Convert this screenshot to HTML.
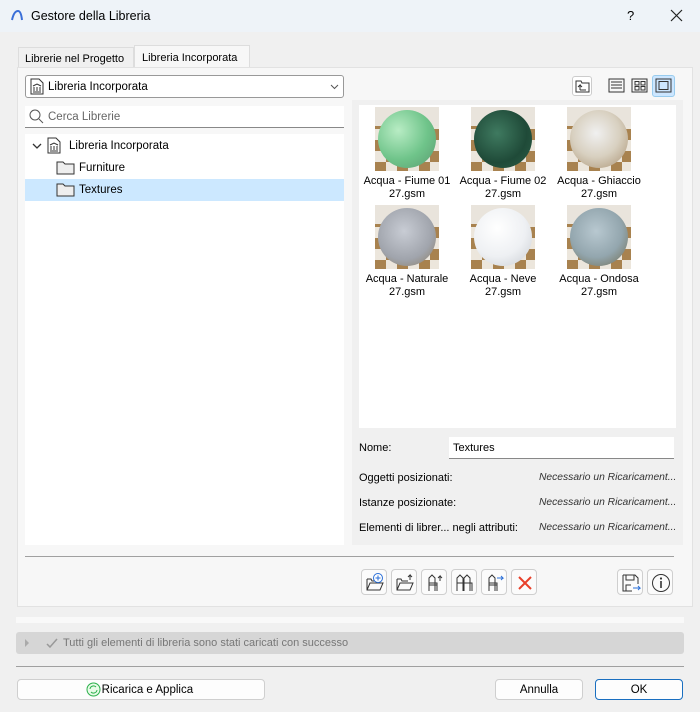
<!DOCTYPE html><html><head><meta charset="utf-8"><style>
*{box-sizing:border-box;margin:0;padding:0}
body{width:700px;height:712px;background:#f0f0f0;font-family:"Liberation Sans",sans-serif;font-size:11.5px;color:#000;position:relative;overflow:hidden}
.a{position:absolute}
.btn{position:absolute;background:#fdfdfd;border:1px solid #cfcfcf;border-radius:4px;text-align:center}
.ib{position:absolute;top:569px;width:26px;height:26px;background:#fbfbfb;border:1px solid #cfcfcf;border-radius:4px}
.ib svg{position:absolute;left:3px;top:3px}
.th{position:absolute;width:64px;height:64px;background:
 linear-gradient(#e9e4dc 0 30%,transparent 30%),
 conic-gradient(#a8824f 25%,#ece6dc 0 50%,#a8824f 0 75%,#ece6dc 0) 0 0/22px 22px}
.th i{position:absolute;left:3px;top:3px;width:58px;height:58px;border-radius:50%}
.lb{position:absolute;width:96px;text-align:center;font-size:11px;line-height:13px}
.row{position:absolute;left:359px;font-size:11px}
.it{position:absolute;left:539px;width:136px;font-size:10.3px;font-style:italic;color:#333;white-space:nowrap;overflow:hidden}
</style></head><body>
<div class="a" style="left:0;top:0;width:700px;height:32px;background:#eef3f8"></div>
<svg class="a" style="left:10px;top:9px" width="14" height="12"><path d="M2 11 Q4 2 8 2 Q11 2 12 11" fill="none" stroke="#3a6fd8" stroke-width="2"/></svg>
<div class="a" style="left:31px;top:9px;font-size:12.5px">Gestore della Libreria</div>
<div class="a" style="left:627px;top:8px;font-size:13px">?</div>
<svg class="a" style="left:670px;top:9px" width="13" height="13"><path d="M1 1L12 12M12 1L1 12" stroke="#222" stroke-width="1.2"/></svg>
<div class="a" style="left:18px;top:47px;width:116px;height:21px;border:1px solid #ddd;border-bottom:none;background:#f0f0f0;padding:5px 6px;font-size:11px">Librerie nel Progetto</div>
<div class="a" style="left:134px;top:45px;width:116px;height:23px;border:1px solid #ddd;border-bottom:none;background:#f7f7f7;padding:6px 7px;font-size:11px">Libreria Incorporata</div>
<div class="a" style="left:17px;top:67px;width:676px;height:540px;background:#f7f7f7;border:1px solid #e2e2e2"></div>
<div class="a" style="left:25px;top:75px;width:319px;height:23px;background:#fff;border:1px solid #999;border-radius:3px"></div>
<svg class="a" style="left:30px;top:78px" width="14" height="17"><path d="M1 1h8l4 4v11H1z" fill="#fff" stroke="#333"/><path d="M3 8l4-2 4 2M4 9v4M7 9v4M10 9v4M3 14h8" stroke="#333" fill="none"/></svg>
<div class="a" style="left:48px;top:81px">Libreria Incorporata</div>
<svg class="a" style="left:330px;top:84px" width="9" height="6"><path d="M1 1l3.5 3.5L8 1" stroke="#555" fill="none"/></svg>
<div class="a" style="left:25px;top:106px;width:319px;height:22px;background:#fff;border-bottom:1px solid #888"></div>
<svg class="a" style="left:29px;top:109px" width="15" height="15"><circle cx="6" cy="6" r="5" stroke="#555" fill="none"/><path d="M10 10l4 4" stroke="#555"/></svg>
<div class="a" style="left:48px;top:111px;color:#666">Cerca Librerie</div>
<div class="a" style="left:25px;top:134px;width:319px;height:411px;background:#fff"></div>
<div class="a" style="left:25px;top:179px;width:319px;height:22px;background:#cce8ff"></div>
<svg class="a" style="left:32px;top:142px" width="10" height="8"><path d="M1 2l4 4 4-4" stroke="#333" fill="none" stroke-width="1.3"/></svg>
<svg class="a" style="left:47px;top:137px" width="14" height="17"><path d="M1 1h8l4 4v11H1z" fill="#fff" stroke="#333"/><path d="M3 8l4-2 4 2M4 9v4M7 9v4M10 9v4M3 14h8" stroke="#333" fill="none"/></svg>
<div class="a" style="left:69px;top:140px">Libreria Incorporata</div>
<svg class="a" style="left:56px;top:160px" width="19" height="15"><path d="M1 2h6l2 2h9v10H1z" fill="#eee" stroke="#333"/></svg>
<div class="a" style="left:79px;top:162px">Furniture</div>
<svg class="a" style="left:56px;top:182px" width="19" height="15"><path d="M1 2h6l2 2h9v10H1z" fill="#eee" stroke="#333"/></svg>
<div class="a" style="left:79px;top:184px">Textures</div>
<div class="a" style="left:352px;top:100px;width:331px;height:445px;background:#f0f0f0"></div>
<div class="a" style="left:572px;top:76px;width:20px;height:20px;background:#fff;border:1px solid #ccc;border-radius:3px"></div>
<svg class="a" style="left:575px;top:79px" width="15" height="14"><path d="M1 2h5l1 2h7v9H1z" fill="none" stroke="#333"/><path d="M5 11V6l-2 2M5 6l2 2M5 11h6" stroke="#333" fill="none"/></svg>
<svg class="a" style="left:608px;top:78px" width="18" height="16"><rect x="1" y="1" width="15" height="13" fill="none" stroke="#333"/><path d="M3 4h11M3 7h11M3 10h11" stroke="#333"/></svg>
<svg class="a" style="left:631px;top:78px" width="18" height="16"><rect x="1" y="1" width="15" height="13" fill="none" stroke="#333"/><rect x="4" y="3.5" width="4" height="3.5" fill="none" stroke="#333"/><rect x="10" y="3.5" width="4" height="3.5" fill="none" stroke="#333"/><rect x="4" y="8.5" width="4" height="3.5" fill="none" stroke="#333"/><rect x="10" y="8.5" width="4" height="3.5" fill="none" stroke="#333"/></svg>
<div class="a" style="left:652px;top:75px;width:23px;height:22px;background:#cce6ff;border:1px solid #99ccee;border-radius:3px"></div>
<svg class="a" style="left:655px;top:78px" width="18" height="16"><rect x="1" y="1" width="15" height="13" fill="none" stroke="#333"/><rect x="4" y="3.5" width="9" height="8" fill="none" stroke="#333"/></svg>
<div class="a" style="left:359px;top:105px;width:317px;height:323px;background:#fff"></div>
<div class="th" style="left:375px;top:107px"><i style="background:radial-gradient(circle at 35% 35%,#b8ecc4,#6fc48a 55%,#5a9a70)"></i></div>
<div class="th" style="left:471px;top:107px"><i style="background:radial-gradient(circle at 40% 40%,#3f7a60,#1f4a38 60%,#2d5f48)"></i></div>
<div class="th" style="left:567px;top:107px"><i style="background:radial-gradient(circle at 45% 40%,#f0f0f0,#d8d0c0 50%,#a89070)"></i></div>
<div class="th" style="left:375px;top:205px"><i style="background:radial-gradient(circle at 45% 40%,#c8ccd4,#a0a4ac 60%,#8a7a5e)"></i></div>
<div class="th" style="left:471px;top:205px"><i style="background:radial-gradient(circle at 40% 35%,#fff,#eef0f3 55%,#c8ccd2)"></i></div>
<div class="th" style="left:567px;top:205px"><i style="background:radial-gradient(circle at 45% 40%,#b8c8d0,#93a6ae 55%,#6e6a4e)"></i></div>
<div class="lb" style="left:359px;top:175px">Acqua - Fiume 01<br>27.gsm</div>
<div class="lb" style="left:455px;top:175px">Acqua - Fiume 02<br>27.gsm</div>
<div class="lb" style="left:551px;top:175px">Acqua - Ghiaccio<br>27.gsm</div>
<div class="lb" style="left:359px;top:273px">Acqua - Naturale<br>27.gsm</div>
<div class="lb" style="left:455px;top:273px">Acqua - Neve<br>27.gsm</div>
<div class="lb" style="left:551px;top:273px">Acqua - Ondosa<br>27.gsm</div>
<div class="row" style="top:442px">Nome:</div>
<div class="a" style="left:449px;top:437px;width:225px;height:22px;background:#fff;border-bottom:1px solid #888;padding:5px 4px;font-size:11px">Textures</div>
<div class="row" style="top:472px">Oggetti posizionati:</div><div class="it" style="top:472px">Necessario un Ricaricament...</div>
<div class="row" style="top:497px">Istanze posizionate:</div><div class="it" style="top:497px">Necessario un Ricaricament...</div>
<div class="row" style="top:522px">Elementi di librer... negli attributi:</div><div class="it" style="top:522px">Necessario un Ricaricament...</div>
<div class="a" style="left:25px;top:556px;width:649px;height:1px;background:#a0a0a0"></div>
<div class="ib" style="left:361px"><svg width="20" height="20"><path d="M2 6h4l1 2h3M2 6v11h13l3-7H5L2 17" fill="none" stroke="#333"/><circle cx="13" cy="5" r="4.5" fill="#fff" stroke="#2a6fd8"/><path d="M13 2.5v5M10.5 5h5" stroke="#2a6fd8"/></svg></div>
<div class="ib" style="left:391px"><svg width="20" height="20"><path d="M2 6h4l1 2h6M2 6v11h13l3-7H5L2 17" fill="none" stroke="#333"/><path d="M15 7V2l-2 2M15 2l2 2" stroke="#333" fill="none"/></svg></div>
<div class="ib" style="left:421px"><svg width="20" height="20"><path d="M4 18V5l3-3 3 3v13M4 10h8v8M4 12h8" fill="none" stroke="#333"/><path d="M15 8V3l-2 2M15 3l2 2" stroke="#333" fill="none"/></svg></div>
<div class="ib" style="left:451px"><svg width="20" height="20"><path d="M2 18V5l3-3 3 3v13M2 10h6M9 18V5l3-3 3 3v13M9 10h8v8" fill="none" stroke="#333"/></svg></div>
<div class="ib" style="left:481px"><svg width="20" height="20"><path d="M4 18V5l3-3 3 3v13M4 10h8v8M4 12h8" fill="none" stroke="#333"/><path d="M12 5h6l-2-2M18 5l-2 2" stroke="#2a6fd8" fill="none"/></svg></div>
<div class="ib" style="left:511px"><svg width="20" height="20"><path d="M4 4l12 12M16 4L4 16" stroke="#e8402a" stroke-width="2"/></svg></div>
<div class="ib" style="left:617px"><svg width="20" height="20"><path d="M2 2h12l3 3v6M2 2v16h9M5 2v5h8V2M5 18v-6h5" fill="none" stroke="#333"/><path d="M12 15h7l-2-2M19 15l-2 2" stroke="#2a6fd8" fill="none"/></svg></div>
<div class="ib" style="left:647px"><svg width="20" height="20"><circle cx="10" cy="10" r="8.5" fill="none" stroke="#333"/><path d="M10 8v7" stroke="#333" stroke-width="1.6"/><circle cx="10" cy="5.5" r="1.1" fill="#333"/></svg></div>
<div class="a" style="left:16px;top:617px;width:668px;height:6px;background:#f9f9f9"></div>
<div class="a" style="left:16px;top:632px;width:668px;height:22px;background:#d6d6d6;border-radius:3px"></div>
<svg class="a" style="left:24px;top:639px" width="6" height="8"><path d="M1 0l4 4-4 4z" fill="#aaa"/></svg>
<svg class="a" style="left:46px;top:638px" width="12" height="10"><path d="M1 6l3 3 7-8" stroke="#999" stroke-width="1.5" fill="none"/></svg>
<div class="a" style="left:63px;top:637px;color:#777;font-size:11px">Tutti gli elementi di libreria sono stati caricati con successo</div>
<div class="a" style="left:16px;top:666px;width:668px;height:1px;background:#a0a0a0"></div>
<div class="btn" style="left:17px;top:679px;width:248px;height:21px;padding-top:4px">&nbsp;&nbsp;&nbsp;&nbsp;Ricarica e Applica</div>
<svg class="a" style="left:86px;top:682px" width="15" height="15"><circle cx="7.5" cy="7.5" r="6.5" fill="#e8fbe8" stroke="#2ab04a"/><path d="M4 7a3.5 3.5 0 0 1 6-2M11 8a3.5 3.5 0 0 1-6 2" stroke="#2ab04a" fill="none"/></svg>
<div class="btn" style="left:495px;top:679px;width:88px;height:21px;padding-top:4px">Annulla</div>
<div class="btn" style="left:595px;top:679px;width:88px;height:21px;padding-top:4px;border:1px solid #1a6fc0">OK</div>
</body></html>
